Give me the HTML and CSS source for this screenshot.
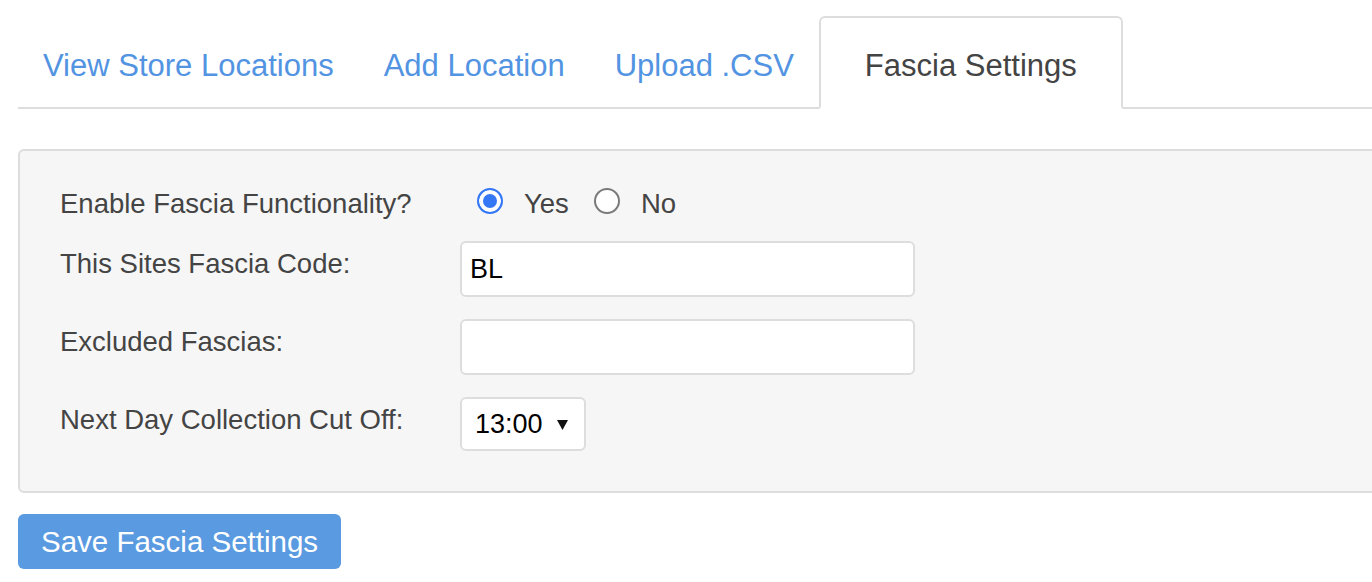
FILE: index.html
```html
<!DOCTYPE html>
<html lang="en">
<head>
<meta charset="utf-8">
<title>Fascia Settings</title>
<link rel="stylesheet" href="styles.css">
</head>
<body>
<div class="page">
  <ul class="tabs">
    <li class="tab"><a class="tab-link" href="#">View Store Locations</a></li>
    <li class="tab"><a class="tab-link" href="#">Add Location</a></li>
    <li class="tab"><a class="tab-link" href="#">Upload .CSV</a></li>
    <li class="tab tab-active"><a class="tab-link" href="#">Fascia Settings</a></li>
  </ul>

  <form class="panel">
    <div class="row row-radio">
      <label class="label">Enable Fascia Functionality?</label>
      <div class="radios">
        <span class="radio radio-checked"></span><span class="radio-text">Yes</span>
        <span class="radio"></span><span class="radio-text">No</span>
      </div>
    </div>
    <div class="row">
      <label class="label">This Sites Fascia Code:</label>
      <div class="field">BL</div>
    </div>
    <div class="row">
      <label class="label">Excluded Fascias:</label>
      <div class="field"></div>
    </div>
    <div class="row row-last">
      <label class="label">Next Day Collection Cut Off:</label>
      <div class="select">
        <span class="select-value">13:00</span>
        <svg class="select-arrow" width="11" height="10" viewBox="0 0 11 10"><polygon points="0,0 11,0 5.5,10" fill="#111"/></svg>
      </div>
    </div>
  </form>

  <button class="btn" type="button">Save Fascia Settings</button>
</div>
</body>
</html>
```
FILE: styles.css
```css
html, body {
  margin: 0;
  padding: 0;
  background: #fff;
  overflow: hidden;
}

body {
  font-family: "Liberation Sans", Arial, Helvetica, sans-serif;
  color: #444;
}

.page {
  padding: 16px 0 0 18px;
}

.tabs {
  display: flex;
  align-items: flex-end;
  list-style: none;
  margin: 0;
  padding: 0;
  border-bottom: 2px solid #ddd;
}

.tab {
  margin-bottom: -2px;
}

.tab-link {
  display: block;
  font-size: 31px;
  line-height: 36px;
  padding: 30px 23px 23px;
  border: 2px solid transparent;
  border-radius: 6px 6px 0 0;
  color: #5294e2;
  text-decoration: none;
  white-space: nowrap;
}

.tab-active .tab-link {
  padding-left: 44px;
  padding-right: 44px;
  background: #fff;
  border-color: #ddd #ddd transparent;
  color: #444;
}

.panel {
  display: flex;
  flex-direction: column;
  gap: 22px;
  margin: 40px -12px 0 0;
  padding: 30px 0 40px 40px;
  background: #f6f6f6;
  border: 2px solid #ddd;
  border-radius: 6px;
}

.row {
  display: flex;
  align-items: flex-start;
}

.row-radio {
  height: 38px;
}

.label {
  width: 400px;
  flex: none;
  font-size: 27.5px;
  line-height: 40px;
  padding-top: 3px;
  color: #444;
}

.radios {
  display: flex;
  align-items: flex-start;
  padding-left: 17px;
}

.radio {
  box-sizing: border-box;
  width: 26px;
  height: 26px;
  margin-top: 7px;
  border: 2px solid #7a7a7a;
  border-radius: 50%;
  background: #fff;
  flex: none;
}

.radio-checked {
  border-color: #3478f6;
  background: #3478f6;
  box-shadow: inset 0 0 0 4px #fff;
}

.radio-text {
  font-size: 27.5px;
  line-height: 40px;
  padding-top: 3px;
  margin-left: 21px;
  margin-right: 25px;
  color: #444;
}

.field {
  box-sizing: border-box;
  width: 455px;
  height: 56px;
  padding: 0 8px;
  display: flex;
  align-items: center;
  background: #fff;
  border: 2px solid #ddd;
  border-radius: 6px;
  font-size: 27px;
  color: #000;
}

.select {
  box-sizing: border-box;
  width: 126px;
  height: 54px;
  padding: 0 16px 0 13px;
  display: flex;
  align-items: center;
  justify-content: space-between;
  background: #fff;
  border: 2px solid #ddd;
  border-radius: 6px;
  font-size: 27px;
  color: #000;
}

.select-arrow {
  display: block;
  margin-top: 2px;
}

.btn {
  display: flex;
  align-items: center;
  margin-top: 21px;
  height: 55px;
  padding: 0 23px;
  background: #5a9ae0;
  color: #fff;
  border: 0;
  border-radius: 6px;
  font-family: "Liberation Sans", Arial, Helvetica, sans-serif;
  font-size: 29.5px;
}
```
